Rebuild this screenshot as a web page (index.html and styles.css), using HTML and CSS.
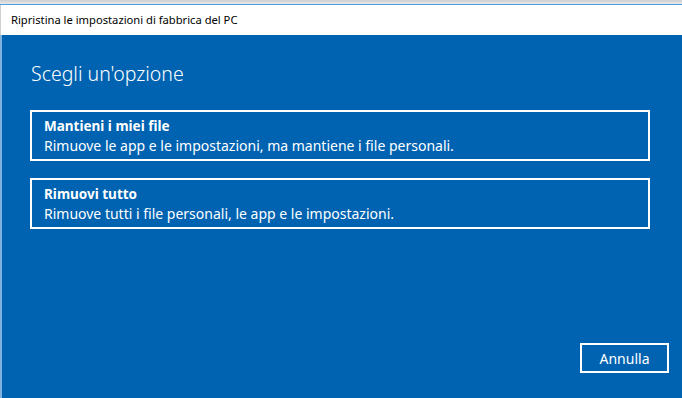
FILE: index.html
```html
<!DOCTYPE html>
<html>
<head>
    <title>Ripristina le impostazioni di fabbrica del PC</title>
    <link rel="stylesheet" href="styles.css">
</head>
<body>
    <div class="window">
        <div class="chrome"></div>
        <div class="titlebar">Ripristina le impostazioni di fabbrica del PC</div>
        <div class="content">
            <h1 class="heading">Scegli un'opzione</h1>
            <div class="options">
                <button class="option">
                    <span class="option-title">Mantieni i miei file</span>
                    <span class="option-desc">Rimuove le app e le impostazioni, ma mantiene i file personali.</span>
                </button>
                <button class="option">
                    <span class="option-title">Rimuovi tutto</span>
                    <span class="option-desc">Rimuove tutti i file personali, le app e le impostazioni.</span>
                </button>
            </div>
            <div class="footer">
                <button class="cancel">Annulla</button>
            </div>
        </div>
    </div>
</body>
</html>
```

FILE: styles.css
```css
body {
    margin: 0;
    font-family: "Noto Sans", "Open Sans", sans-serif;
    background-color: #0063b1;
}
.window {
    display: flex;
    flex-direction: column;
    width: 682px;
    height: 398px;
    overflow: hidden;
}
.chrome {
    height: 4px;
    background: linear-gradient(#cfcfcf, #e8e8e8);
    border-bottom: 1px solid #4a9ee0;
}
.titlebar {
    height: 30px;
    line-height: 29px;
    padding-left: 10px;
    background-color: #ffffff;
    color: #000000;
    font-size: 11.2px;
    border-left: 1px solid #d0d0d0;
}
.content {
    flex: 1;
    display: flex;
    flex-direction: column;
    padding: 0 13px 0 28px;
    background-color: #0063b1;
    border-left: 2px solid #7fb3de;
    color: #ffffff;
}
.heading {
    margin: 24px 0 0 1px;
    font-size: 19.5px;
    font-weight: 300;
    line-height: 30px;
}
.options {
    display: flex;
    flex-direction: column;
    gap: 17px;
    margin: 21px 19px 0 0;
}
.option {
    display: flex;
    flex-direction: column;
    align-items: flex-start;
    height: 51px;
    padding: 5px 12px 0;
    border: 2px solid #ffffff;
    background: transparent;
    color: #ffffff;
    font-family: inherit;
    text-align: left;
}
.option-title {
    font-size: 13.5px;
    font-weight: 700;
    line-height: 19px;
}
.option-desc {
    font-size: 14px;
    line-height: 20px;
}
.footer {
    display: flex;
    justify-content: flex-end;
    margin-top: auto;
    margin-bottom: 25px;
}
.cancel {
    width: 89px;
    height: 30px;
    border: 2px solid #ffffff;
    background: transparent;
    color: #ffffff;
    font-family: inherit;
    font-size: 14px;
}
```
